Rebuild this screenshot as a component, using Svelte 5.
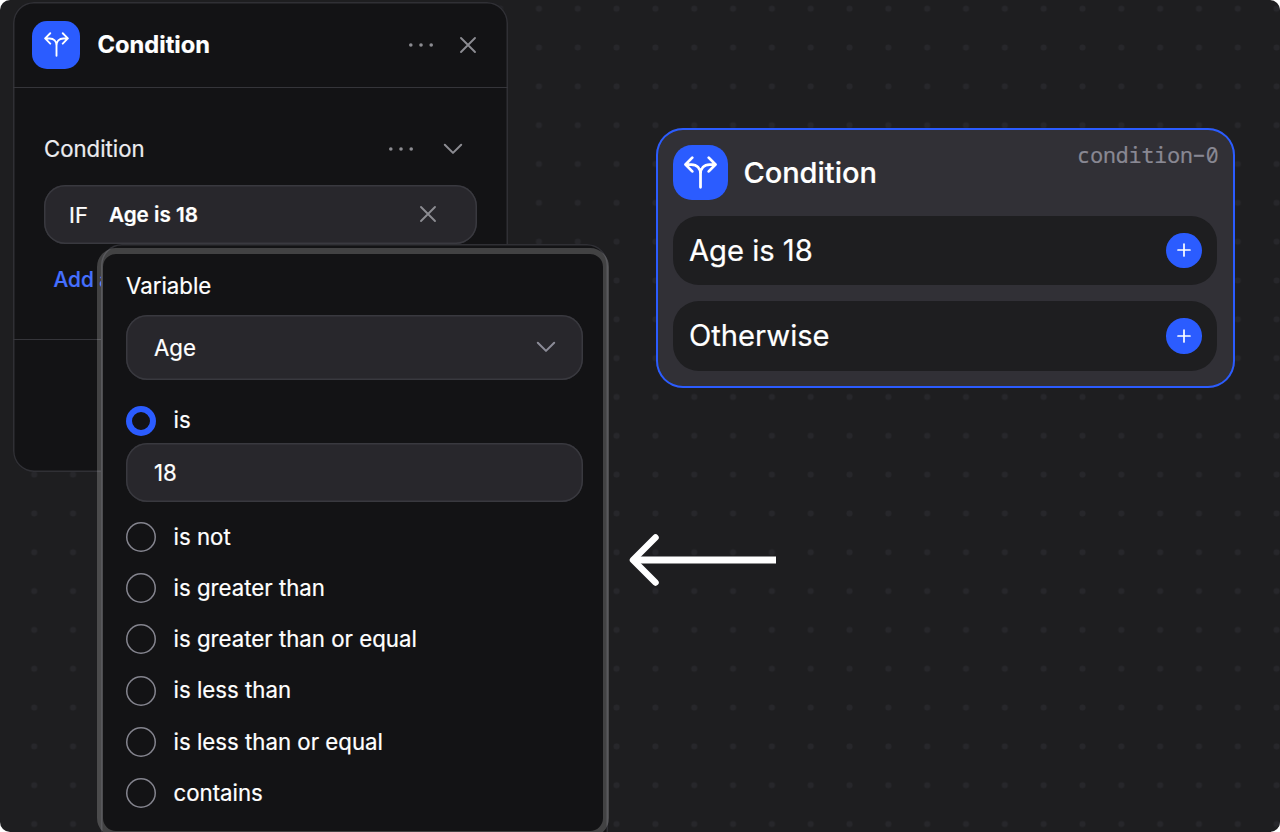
<script>
  const operators = [
    'is not',
    'is greater than',
    'is greater than or equal',
    'is less than',
    'is less than or equal',
    'contains',
  ];
  const branches = ['Age is 18', 'Otherwise'];
</script>

{#snippet fork(size, weight)}
  <svg width={size} height={size} viewBox="0 0 24 24" fill="none" stroke="currentColor" stroke-width={weight} stroke-linecap="round" stroke-linejoin="round">
    <path d="M12 22.800V13C12 9 9.400 6.200 5.400 6.200H1.200M12 13C12 9 14.600 6.200 18.600 6.200H22.800M6 1.200L1.100 6.200L6 11.200M18 1.200L22.900 6.200L18 11.200" />
  </svg>
{/snippet}

{#snippet dots()}
  <svg width="26" height="6" viewBox="0 0 26 6" fill="currentColor">
    <circle cx="2.800" cy="3" r="1.800" /><circle cx="13" cy="3" r="1.800" /><circle cx="23.200" cy="3" r="1.800" />
  </svg>
{/snippet}

{#snippet cross()}
  <svg width="18" height="18" viewBox="0 0 18 18" fill="none" stroke="currentColor" stroke-width="1.9" stroke-linecap="round">
    <path d="M2 2L16 16M16 2L2 16" />
  </svg>
{/snippet}

{#snippet chevron()}
  <svg width="20" height="12" viewBox="0 0 20 12" fill="none" stroke="currentColor" stroke-width="2" stroke-linecap="round" stroke-linejoin="round">
    <path d="M1.800 1.700L10 9.900L18.200 1.700" />
  </svg>
{/snippet}

<main class="canvas">
  <svg class="grid" width="1280" height="832">
    <defs>
      <pattern id="dot-grid" x="14.800" y="-10.700" width="38.825" height="38.825" patternUnits="userSpaceOnUse">
        <circle cx="19.400" cy="19.400" r="3" fill="#27272b" />
      </pattern>
    </defs>
    <rect width="1280" height="832" fill="url(#dot-grid)" />
  </svg>

  <section class="panel">
    <header>
      <span class="badge">{@render fork(25, 1.8)}</span>
      <h1>Condition</h1>
      <span class="tool">{@render dots()}</span>
      <span class="tool close">{@render cross()}</span>
    </header>
    <div class="body">
      <div class="heading">
        <h2>Condition</h2>
        <span class="tool">{@render dots()}</span>
        <span class="tool fold">{@render chevron()}</span>
      </div>
      <div class="rule">
        <span class="if">IF</span>
        <span class="expr">Age is 18</span>
        <span class="tool">{@render cross()}</span>
      </div>
      <a class="add" href="#add">Add a</a>
    </div>
  </section>

  <section class="popover">
    <div class="label">Variable</div>
    <div class="select"><span>Age</span>{@render chevron()}</div>
    <div class="option first"><span class="radio on"></span><span>is</span></div>
    <div class="input">18</div>
    <div class="options">
      {#each operators as name}
        <div class="option"><span class="radio"></span><span>{name}</span></div>
      {/each}
    </div>
  </section>
  <div class="ring"></div>

  <section class="node">
    <header>
      <span class="badge large">{@render fork(33, 2)}</span>
      <h3>Condition</h3>
      <code>condition−0</code>
    </header>
    {#each branches as branch}
      <div class="branch">
        <span class="name">{branch}</span>
        <span class="plus">
          <svg width="14" height="14" viewBox="0 0 14 14" stroke="#fff" stroke-width="1.700" stroke-linecap="round">
            <path d="M7 1V13M1 7H13" />
          </svg>
        </span>
      </div>
    {/each}
  </section>

  <svg class="arrow" width="150" height="56" viewBox="0 0 150 56" fill="none" stroke="#fff" stroke-width="7">
    <path d="M8 28H148" />
    <path d="M27.500 5.500L5 28L27.500 50.500" stroke-width="6.500" stroke-linecap="round" stroke-linejoin="round" />
  </svg>
</main>

<style>
  :global(body) {
    margin: 0;
    background: #fff;
  }
  .canvas {
    position: relative;
    width: 1280px;
    height: 832px;
    overflow: hidden;
    border-radius: 10px;
    background: #1e1e20;
    color: #fff;
    font-family: Inter, sans-serif;
    font-size: 22.250px;
    -webkit-text-stroke: 0.200px currentColor;
  }
  .canvas * {
    box-sizing: border-box;
  }
  svg {
    display: block;
    flex: none;
  }
  h1, h2, h3 {
    margin: 0;
  }
  .grid {
    position: absolute;
    inset: 0;
  }
  .panel {
    position: absolute;
    left: 13px;
    top: 2px;
    width: 495px;
    height: 470px;
    border-radius: 21px;
    background: #131315;
    box-shadow: inset 0 0 0 1.500px #303035;
  }
  .panel header {
    display: flex;
    align-items: center;
    height: 86px;
    padding: 0 31px 0 19px;
    border-bottom: 1px solid #35353a;
  }
  .badge {
    display: grid;
    place-items: center;
    flex: none;
    width: 48px;
    height: 48px;
    border-radius: 15px;
    background: #2b5cff;
    color: #fff;
  }
  h1 {
    flex: 1;
    margin-left: 17.500px;
    font-size: 23.700px;
    font-weight: 700;
    line-height: 30px;
  }
  .tool {
    color: #8c8c92;
  }
  .close {
    margin-left: 25px;
  }
  .body {
    height: 252px;
    padding: 44.500px 31px 0 31px;
    border-bottom: 1px solid #35353a;
  }
  .heading {
    display: flex;
    align-items: center;
    height: 32px;
    padding-right: 14.500px;
  }
  h2 {
    flex: 1;
    margin-top: 1px;
    font-size: 22.200px;
    font-weight: 400;
    line-height: 28px;
    color: #ececef;
  }
  .fold {
    margin-left: 29px;
  }
  .rule {
    display: flex;
    align-items: center;
    height: 59.500px;
    margin-top: 20px;
    padding: 0 40.500px 0 25px;
    border-radius: 21px;
    background: #28272c;
    box-shadow: inset 0 0 0 1.500px #39393f;
    line-height: 28px;
  }
  .if {
    margin-top: 1px;
    font-size: 22px;
  }
  .expr {
    flex: 1;
    margin: 1px 0 0 21px;
    font-size: 20.700px;
    font-weight: 600;
  }
  .add {
    display: block;
    margin: 21.500px 0 0 9.500px;
    color: #4570ff;
    font-size: 20.800px;
    font-weight: 500;
    line-height: 28px;
    text-decoration: none;
  }
  .popover {
    position: absolute;
    left: 101px;
    top: 244px;
    width: 506.500px;
    height: 620px;
    padding: 27px 24.500px 0 25px;
    border-radius: 21px;
    background: #131315;
    box-shadow: inset 0 0 0 1.500px #303035;
  }
  .ring {
    position: absolute;
    left: 97px;
    top: 248px;
    width: 512px;
    height: 589px;
    border: 6px solid rgba(255, 255, 255, 0.2);
    border-radius: 19px;
  }
  .label {
    line-height: 29px;
  }
  .select {
    display: flex;
    align-items: center;
    justify-content: space-between;
    height: 65px;
    margin-top: 14.500px;
    padding: 0 27.500px 0 28px;
    border-radius: 21px;
    background: #28272c;
    box-shadow: inset 0 0 0 1.500px #39393f;
    line-height: 28px;
  }
  .select span {
    margin-top: 1px;
  }
  .select svg {
    color: #8c8c98;
  }
  .option {
    display: flex;
    align-items: center;
    gap: 17.500px;
    height: 30px;
    line-height: 28px;
  }
  .option span:last-child {
    margin-top: -0.500px;
  }
  .first {
    margin-top: 26px;
  }
  .radio {
    width: 30px;
    height: 30px;
    border-radius: 50%;
    box-shadow: inset 0 0 0 1.500px #85858f;
  }
  .on {
    box-shadow: inset 0 0 0 6px #2b5cff;
  }
  .input {
    height: 59px;
    margin-top: 7.500px;
    padding-left: 28px;
    border-radius: 21px;
    background: #28272c;
    box-shadow: inset 0 0 0 1.500px #39393f;
    line-height: 60px;
  }
  .options {
    display: grid;
    gap: 21.200px;
    margin-top: 20px;
  }
  .node {
    position: absolute;
    left: 656px;
    top: 128px;
    width: 578.500px;
    height: 260px;
    padding: 17px 17.500px 0 17.400px;
    border-radius: 27px;
    background: #313036;
    box-shadow: inset 0 0 0 2px #2b5cff;
    font-size: 29.200px;
  }
  .node header {
    display: flex;
    align-items: center;
    height: 55px;
  }
  .large {
    width: 54.500px;
    height: 54.500px;
    border-radius: 19px;
  }
  h3 {
    flex: 1;
    margin-left: 15.500px;
    font-size: 29px;
    font-weight: 500;
    line-height: 36px;
  }
  code {
    align-self: flex-start;
    margin: -4px -1.500px 0 0;
    color: #898893;
    font: 21.400px/28px "Noto Sans Mono", "DejaVu Sans Mono", monospace;
  }
  .branch {
    display: flex;
    align-items: center;
    justify-content: space-between;
    height: 69.800px;
    margin-top: 15.600px;
    padding: 0 15.500px 0 15.500px;
    border-radius: 26px;
    background: #1e1e20;
  }
  .name {
    margin-top: 0.500px;
    line-height: 36px;
  }
  .plus {
    display: grid;
    place-items: center;
    width: 35.500px;
    height: 35.500px;
    border-radius: 50%;
    background: #2b5cff;
  }
  .arrow {
    position: absolute;
    left: 628px;
    top: 532px;
  }
</style>
